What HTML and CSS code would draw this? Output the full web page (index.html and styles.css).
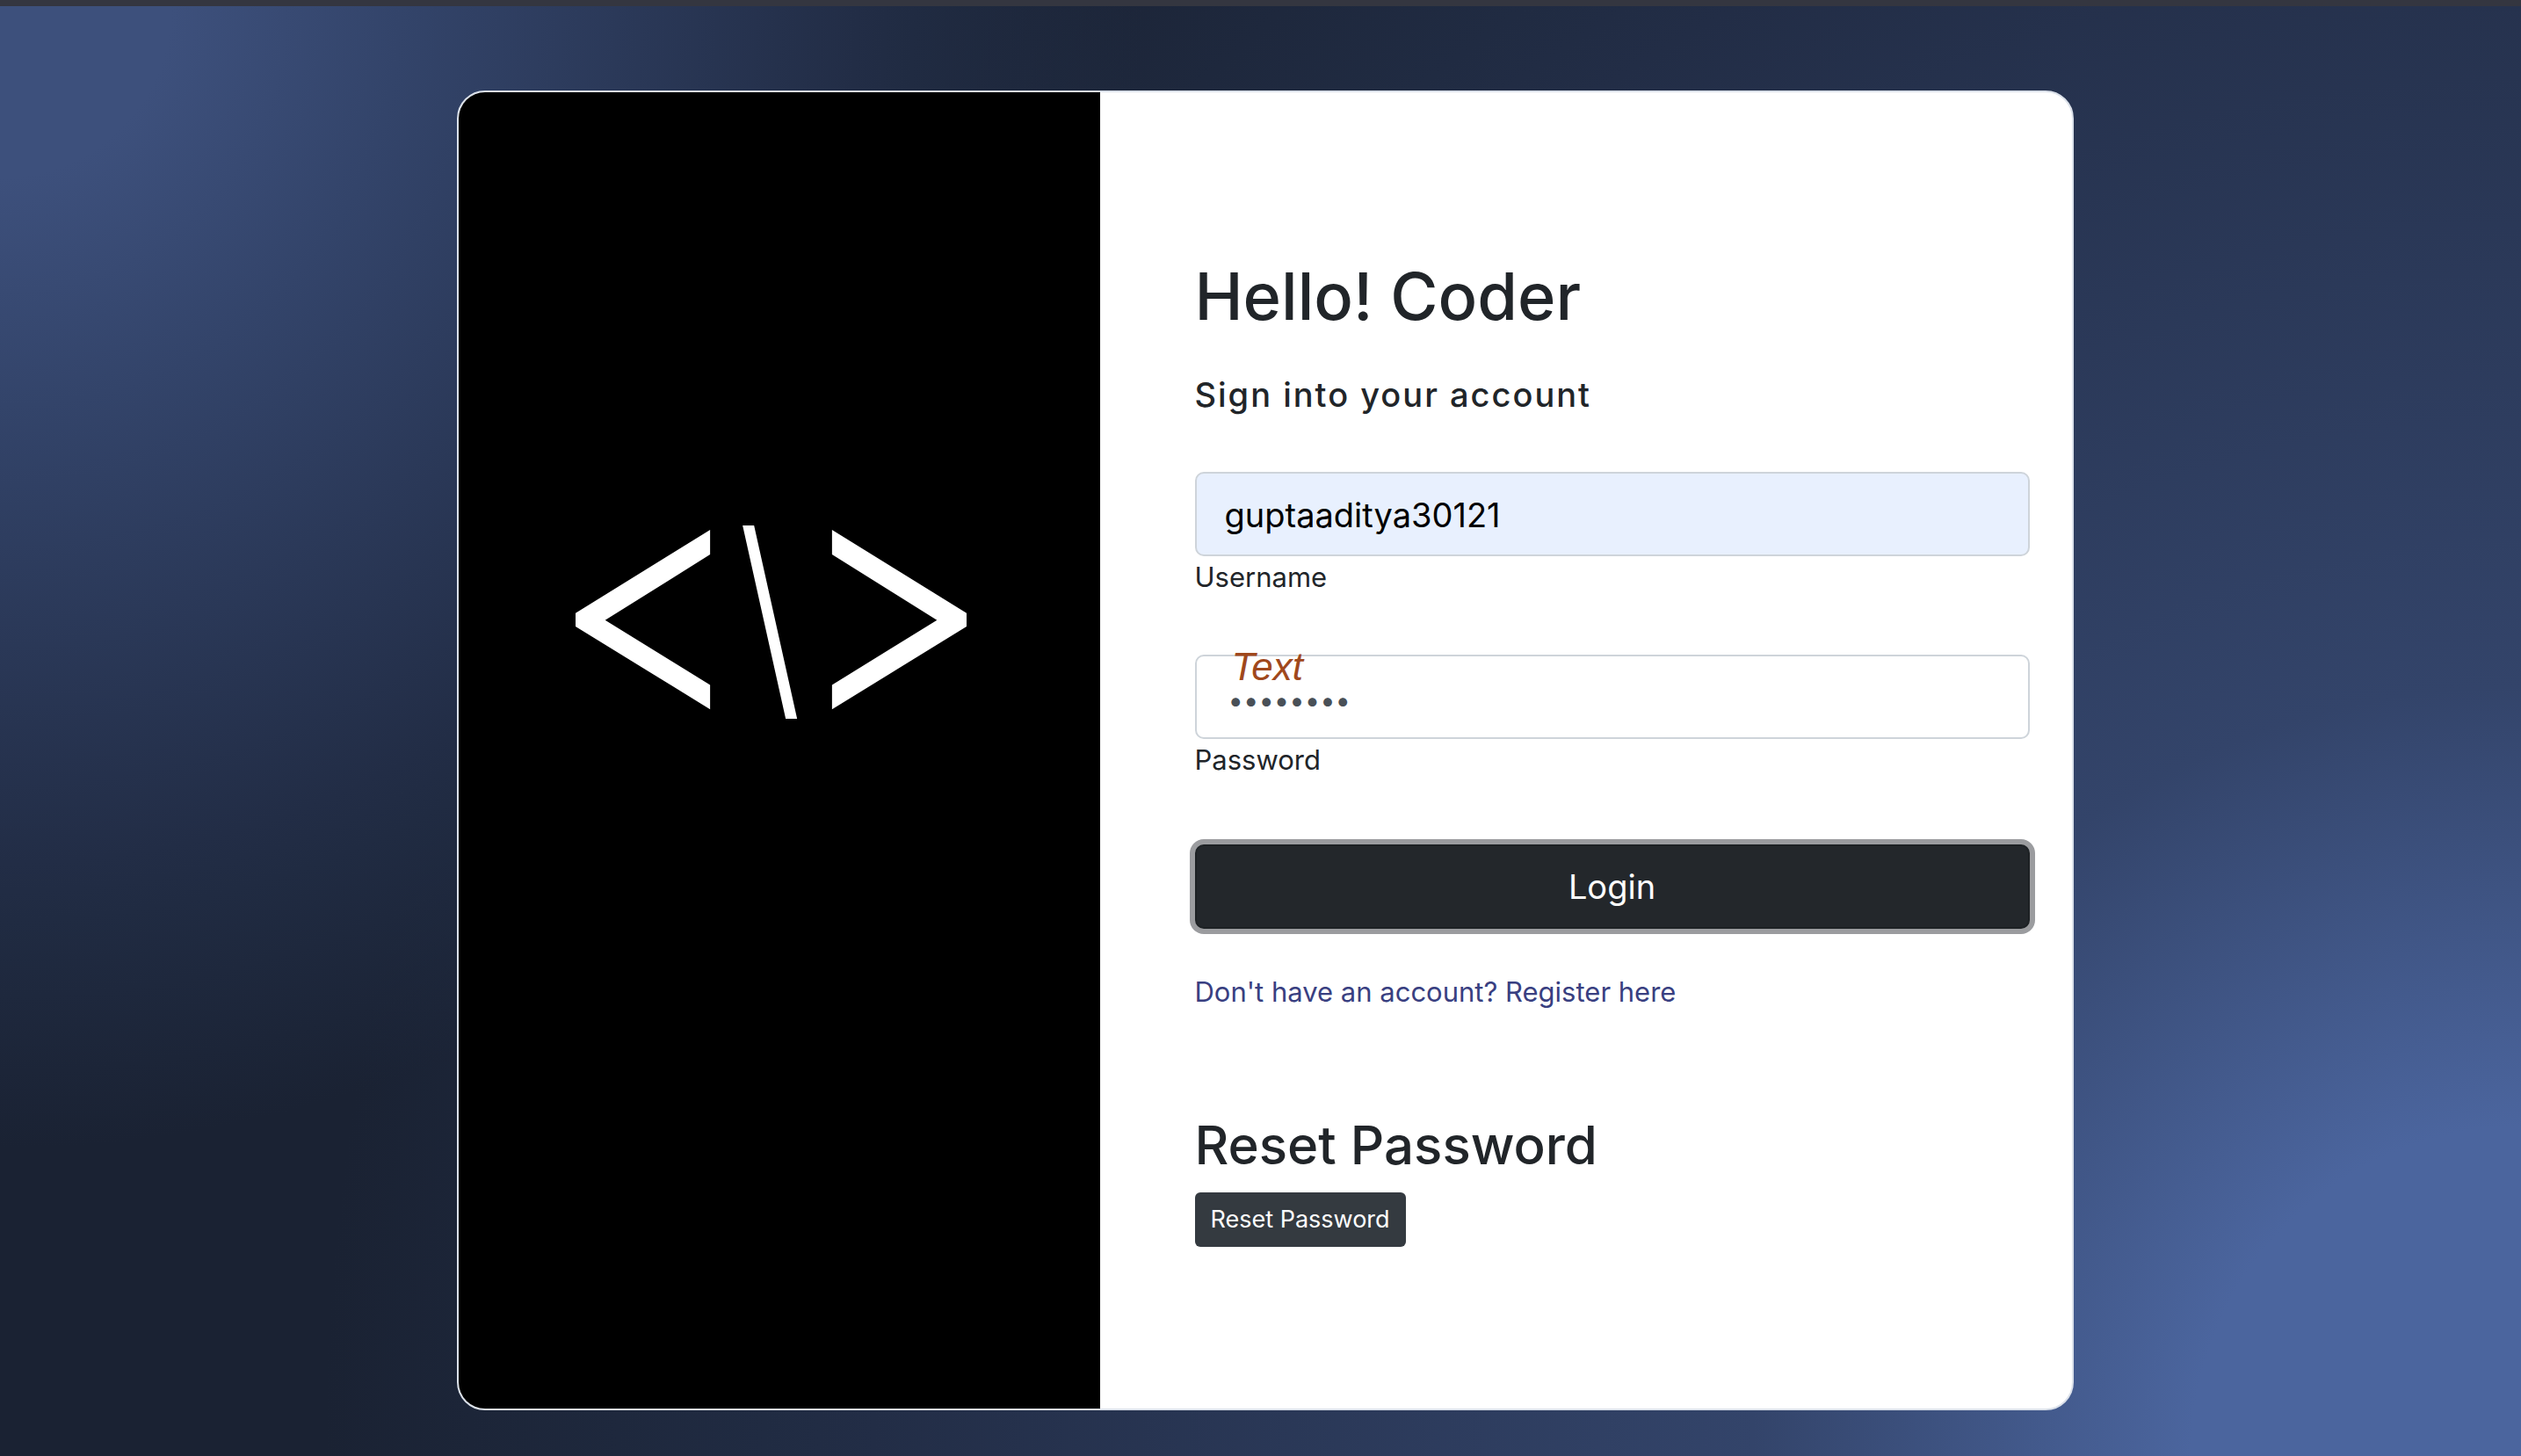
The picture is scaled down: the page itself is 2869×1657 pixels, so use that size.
FILE: index.html
```html
<!DOCTYPE html>
<html lang="en">
<head>
<meta charset="utf-8">
<meta name="viewport" content="width=device-width, initial-scale=1">
<title>Login</title>
<link rel="stylesheet" href="styles.css">
</head>
<body>
<main class="page">
  <section class="card">
    <div class="brand">
      <svg class="logo" viewBox="0 0 1334 660" role="img" aria-label="Code">
        <path fill="#fff" d="M459 15V99L101 323L459 544V627L0 345V299ZM875 15V99L1233 323L875 544V627L1334 345V299ZM570 0H609L756 660H717Z"/>
      </svg>
    </div>
    <div class="content">
      <form class="login">
        <h1 class="title">Hello! Coder</h1>
        <h2 class="subtitle">Sign into your account</h2>
        <div class="field">
          <input class="input input-filled" type="text" id="username" value="guptaaditya30121">
          <label class="label" for="username">Username</label>
        </div>
        <div class="field">
          <input class="input input-password" type="password" id="password" value="password">
          <span class="note">Text</span>
          <label class="label" for="password">Password</label>
        </div>
        <button class="button" type="button">Login</button>
        <a class="link" href="#register">Don't have an account? Register here</a>
      </form>
      <h2 class="reset-title">Reset Password</h2>
      <button class="button-small" type="button">Reset Password</button>
    </div>
  </section>
</main>
</body>
</html>
```
FILE: styles.css
```css
* {
  box-sizing: border-box;
}

body {
  margin: 0;
  font-family: Inter, "Liberation Sans", sans-serif;
  font-size: 31px;
  line-height: 48px;
  color: #212529;
}

.page {
  min-height: 100vh;
  padding: 96px 24px 48px 34px;
  border-top: 7px solid #343640;
  background-color: #1a2233;
  background-image:
    radial-gradient(1300px circle at 0% 0%, #3d507c 15%, #33446a 35%, #222d46 75%, #202b42 80%, transparent 100%),
    radial-gradient(2500px circle at 100% 100%, #4b659e 15%, #33446a 35%, #222d46 75%, #202b42 80%, transparent 100%);
}

.card {
  display: grid;
  grid-template-columns: 730fr 1106fr;
  max-width: 1840px;
  min-height: 1502px;
  margin: 0 auto;
  border: 2px solid #dbe1ea;
  border-radius: 32px;
  background: #fff;
  overflow: hidden;
}

.brand {
  padding: 493px 152px 0 133px;
  background: #000;
}

.logo {
  display: block;
  width: 100%;
}

.content {
  display: flex;
  flex-direction: column;
  align-items: flex-start;
  justify-content: center;
  padding: 0 48px 0 108px;
}

.login {
  display: flex;
  flex-direction: column;
  align-items: flex-start;
  width: 100%;
  margin-bottom: 112px;
}

.title {
  margin: 0 0 40px;
  font-size: 74px;
  line-height: 96px;
  font-weight: 500;
}

.subtitle {
  margin: 0 0 64px;
  font-size: 38px;
  line-height: 48px;
  font-weight: 500;
  letter-spacing: 2px;
}

.field {
  position: relative;
  width: 100%;
  margin-bottom: 64px;
}

.input {
  display: block;
  width: 100%;
  height: 96px;
  padding: 2px 32px 0;
  border: 2px solid #ced4da;
  border-radius: 10px;
  background: #fff;
  font: inherit;
  font-size: 38px;
  color: #495057;
}

.input-filled {
  background: #e8f0fe;
  color: #000;
}

.input-password {
  padding: 6px 36px 0;
  font-size: 31px;
}

.label {
  display: block;
}

.note {
  position: absolute;
  top: -10px;
  left: 42px;
  font-family: "Liberation Sans", sans-serif;
  font-size: 44px;
  font-style: italic;
  color: #a0481c;
}

.button {
  width: 100%;
  height: 96px;
  margin: 8px 0 48px;
  border: 2px solid #1d2124;
  border-radius: 10px;
  background: #23272b;
  box-shadow: 0 0 0 6px #9b9c9f;
  font: inherit;
  font-size: 38px;
  color: #fff;
}

.link {
  color: #393f81;
  text-decoration: none;
}

.reset-title {
  margin: 0 0 16px;
  font-size: 60px;
  line-height: 76px;
  font-weight: 500;
}

.button-small {
  height: 62px;
  padding: 0 18px;
  border: 0;
  border-radius: 6px;
  background: #343a40;
  font: inherit;
  font-size: 27px;
  color: #fff;
}
```
